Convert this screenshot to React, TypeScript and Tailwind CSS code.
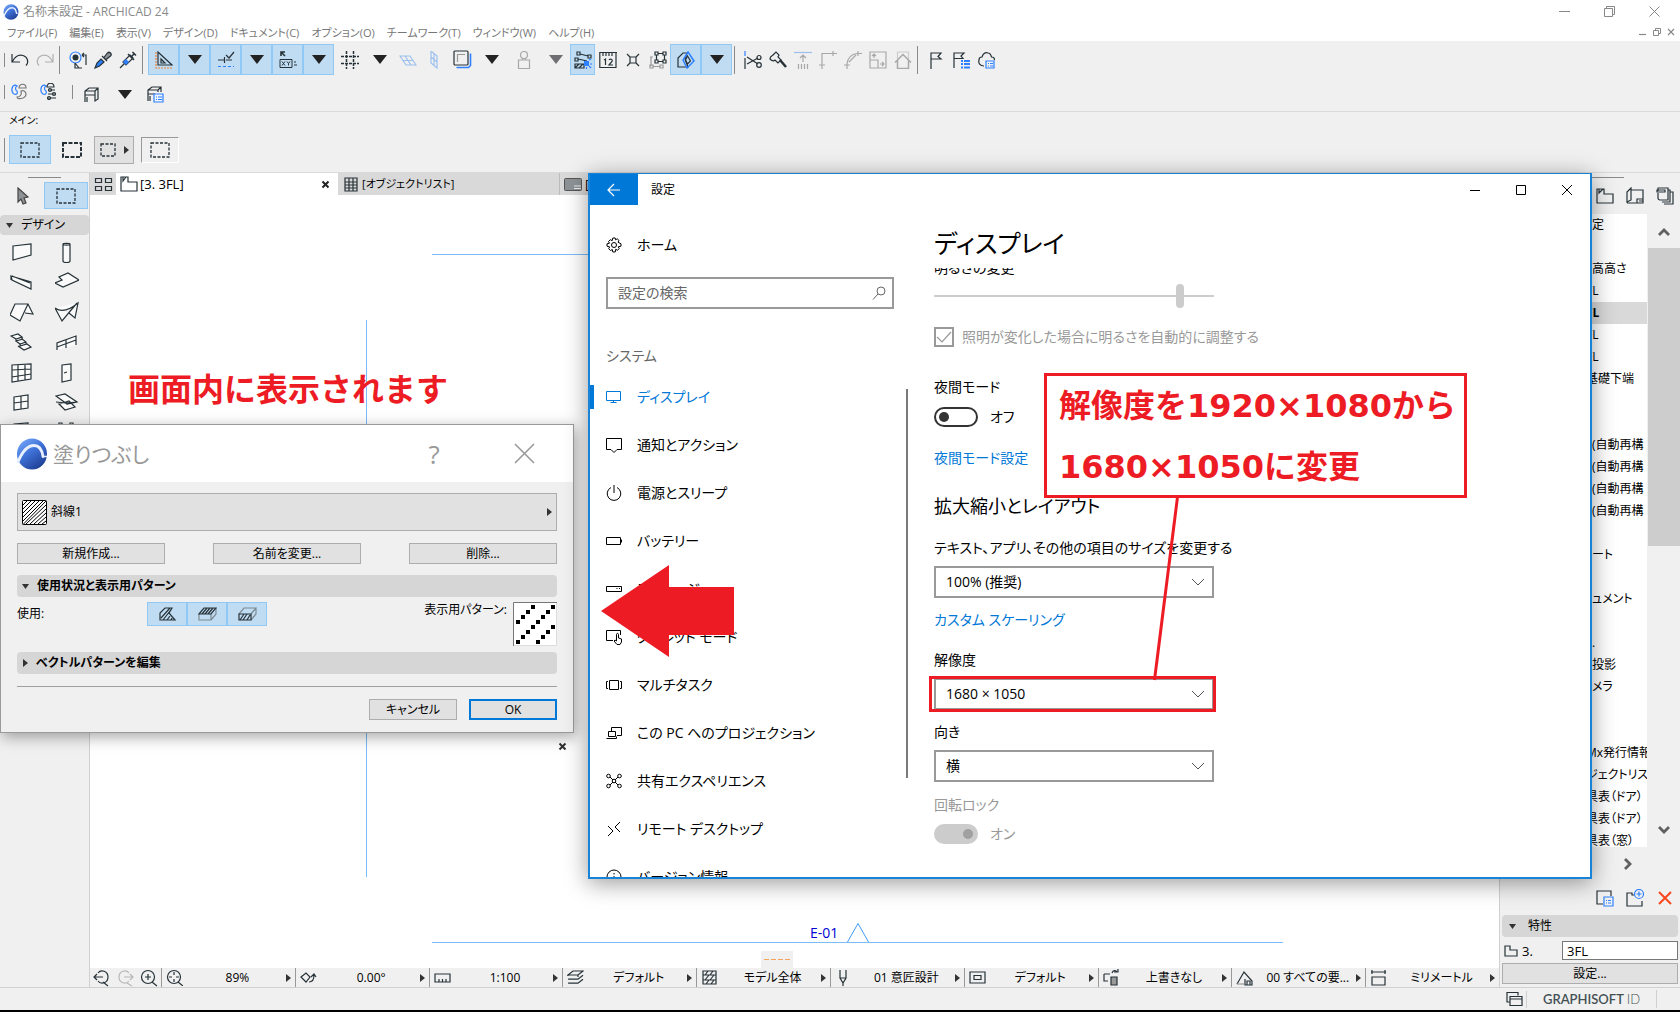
import type { ReactNode } from 'react'
import clsx from 'clsx'

interface IconProps {
    children: ReactNode
    size?: number
    stroke?: number
    className?: string
}

const INK = '#263238'
const BLUE = '#2f80ff'
const RED = '#ed1c24'

const Icon = ({ children, size = 18, stroke = 1.2, className }: IconProps) => (
    <svg
        width={size}
        height={size}
        viewBox={`0 0 ${size} ${size}`}
        fill="none"
        stroke="currentColor"
        strokeWidth={stroke}
        className={clsx('flex-shrink-0', className ?? 'text-[#263238]')}
        aria-hidden="true"
    >
        {children}
    </svg>
)

const Logo = ({ size }: { size: number }) => (
    <svg width={size} height={size} viewBox="0 0 32 32" className="flex-shrink-0" aria-hidden="true">
        <defs>
            <linearGradient id={`sphere${size}`} x1="0" y1="0" x2="0.7" y2="1">
                <stop offset="0" stopColor="#7fb0ff" />
                <stop offset="0.5" stopColor="#3f72d8" />
                <stop offset="1" stopColor="#1f3f94" />
            </linearGradient>
        </defs>
        <ellipse cx="16" cy="16" rx="15" ry="15.5" fill={`url(#sphere${size})`} />
        <path
            d="M2 24C6 14 11 7.500 18 7.500c5 0 8 4 9 11"
            fill="none"
            stroke="#e8f0ff"
            strokeWidth="2.800"
            strokeLinecap="round"
        />
        <path d="M27 18.500h4" stroke="#e8f0ff" strokeWidth="1.500" />
    </svg>
)

const TriDown = ({ dim }: { dim?: boolean }) => (
    <svg width="14" height="9" viewBox="0 0 14 9" aria-hidden="true">
        <path d="M0 0h14L7 9z" fill={dim ? '#6f6f73' : '#222'} />
    </svg>
)

const TriRight = () => (
    <svg width="5" height="8" viewBox="0 0 5 8" className="flex-shrink-0" aria-hidden="true">
        <path d="M0 0l5 4-5 4z" fill="#333" />
    </svg>
)

const Chevron = () => (
    <Icon size={14} className="text-[#555]">
        <path d="M1 4l6 6 6-6" strokeWidth={1} />
    </Icon>
)

const Marquee = ({ bold }: { bold?: boolean }) => (
    <svg width="20" height="16" viewBox="0 0 20 16" fill="none" stroke={INK} aria-hidden="true">
        <rect
            x="1"
            y="1"
            width="18"
            height="14"
            strokeWidth={bold ? 2 : 1.3}
            strokeDasharray={bold ? '4 1.5' : '3 1.5'}
        />
    </svg>
)

const SmallMarquee = () => (
    <svg width="16" height="14" viewBox="0 0 16 14" fill="none" stroke={INK} aria-hidden="true">
        <rect x="1" y="1" width="14" height="12" strokeWidth="1.3" strokeDasharray="3 1.5" />
    </svg>
)

interface ToolProps {
    label: string
    width?: string
    active?: boolean
    children: ReactNode
}

const Tool = ({ label, width = 'w-[25px]', active, children }: ToolProps) => (
    <button
        aria-label={label}
        className={clsx(
            'h-[31px] flex-shrink-0 flex items-center justify-center',
            width,
            active && 'bg-[#c0dcf3] border border-[#90c8f6]',
        )}
    >
        {children}
    </button>
)

const Divider = () => <div className="w-px h-7 ml-[2px] mr-[5px] bg-[#8a8a8a] flex-shrink-0" />

const Grip = () => <div className="w-px h-[14px] bg-[#8a8a8a] mr-[2px] flex-shrink-0" />

const menus = [
    'ファイル(F)',
    '編集(E)',
    '表示(V)',
    'デザイン(D)',
    'ドキュメント(C)',
    'オプション(O)',
    'チームワーク(T)',
    'ウィンドウ(W)',
    'ヘルプ(H)',
]

const TitleBar = () => (
    <header className="bg-white h-[41px] flex justify-between text-[#777]">
        <div>
            <div className="h-[22px] flex items-center gap-1 pl-[3px] pt-[2px]">
                <Logo size={16} />
                <h1 className="text-[12px] leading-4 text-[#8a8a8a]">名称未設定 - ARCHICAD 24</h1>
            </div>
            <nav className="h-[19px] flex items-center gap-3 pl-[7px] pt-[2px] text-[11px] leading-4">
                {menus.map((menu) => (
                    <button key={menu} className="whitespace-nowrap">
                        {menu}
                    </button>
                ))}
            </nav>
        </div>
        <div className="flex flex-col items-end">
            <div className="h-[22px] flex items-center gap-[34px] pr-5 text-[#888]">
                <button aria-label="最小化">
                    <Icon size={11} className="text-[#888]">
                        <path d="M0 5.500h11" strokeWidth={1} />
                    </Icon>
                </button>
                <button aria-label="元に戻す">
                    <Icon size={11} className="text-[#888]">
                        <path d="M.5 2.500h8v8h-8zM2.500 2.500v-2h8v8h-2" strokeWidth={1} />
                    </Icon>
                </button>
                <button aria-label="閉じる">
                    <Icon size={11} className="text-[#888]">
                        <path d="M.5.500l10 10M10.500.500l-10 10" strokeWidth={1} />
                    </Icon>
                </button>
            </div>
            <div className="h-[19px] flex items-center gap-[6px] pr-[5px]">
                <Icon size={8} className="text-[#888]">
                    <path d="M0 6.500h7" />
                </Icon>
                <Icon size={8} className="text-[#888]">
                    <path d="M.5 2.500h5v5h-5zM2.500 2.500v-2h5v5h-2" strokeWidth={1} />
                </Icon>
                <Icon size={8} className="text-[#888]">
                    <path d="M1 1l6 6M7 1L1 7" />
                </Icon>
            </div>
        </div>
    </header>
)

const Toolbar = () => (
    <div className="border-b border-[#dadada] pb-1">
        <div className="flex items-center pl-1 pt-[3px]">
            <Grip />
            <Tool label="取り消し">
                <Icon>
                    <path d="M1 3v8h8M1.500 10.500C4 5.500 8 3.500 12 4.500c5 1.500 6 7 3 10" />
                </Icon>
            </Tool>
            <Tool label="やり直し">
                <Icon className="text-[#b0b0b0]">
                    <path d="M17 3v8H9M16.500 10.500C14 5.500 10 3.500 6 4.500c-5 1.500-6 7-3 10" />
                </Icon>
            </Tool>
            <Divider />
            <Tool label="検索">
                <Icon>
                    <circle cx="6.500" cy="6.500" r="5.500" stroke={BLUE} />
                    <circle cx="6.500" cy="6.500" r="3" fill={INK} stroke="none" />
                    <path d="M6 12v5h7M6 12l4 5M17 14V4h-4M13 4l2-2M13 4l2 2" />
                </Icon>
            </Tool>
            <Tool label="吸い取り">
                <Icon>
                    <path d="M1 17l2-5 4-4 3 3-4.500 4z" fill={BLUE} stroke={INK} />
                    <path d="M8 5l5 5M9.500 7l4-5c2-2 5 1 3 3l-5 4" fill="#8d9296" />
                </Icon>
            </Tool>
            <Tool label="注入">
                <Icon>
                    <path d="M1 17l4-4M4 11l3 3 7-7-3-3z" />
                    <path d="M4 11l3 3 3-3-3-3z" fill={BLUE} stroke="none" />
                    <path d="M9 3l6 6M12.500 5.500l3-3M13.500 1l3.500 3.500" strokeWidth={1.500} />
                </Icon>
            </Tool>
            <Divider />
            <Tool label="ガイド線" width="w-[31px]" active>
                <Icon>
                    <path d="M3 1v13h14zM6 8v4h4z" />
                    <path d="M1 1v16h17" stroke="#f08030" strokeDasharray="2 1" />
                </Icon>
            </Tool>
            <Tool label="ガイド線オプション" width="w-[31px]" active>
                <TriDown />
            </Tool>
            <Tool label="スナップ" width="w-[31px]" active>
                <Icon>
                    <path d="M1 9h6M7.500 6v6M9 9h6M9 4l3 3 5-6" />
                    <path d="M1 15.500h16" stroke={BLUE} strokeDasharray="3 2" />
                </Icon>
            </Tool>
            <Tool label="スナップオプション" width="w-[31px]" active>
                <TriDown />
            </Tool>
            <Tool label="座標" width="w-[31px]" active>
                <Icon>
                    <path d="M2 5V1h4M2 1l4 4" strokeWidth={1.600} />
                    <path d="M1 8.500h12v8H1zM3 10.500l3 4M6 10.500l-3 4M8 10.500l1.500 2 1.500-2M9.500 12.500v2M15 11h2M15 14h3" strokeWidth={1} />
                </Icon>
            </Tool>
            <Tool label="座標オプション" width="w-[31px]" active>
                <TriDown />
            </Tool>
            <Tool label="グリッド" width="w-8">
                <Icon>
                    <path d="M5.500 0v18M12.500 0v18M0 5.500h18M0 12.500h18" strokeDasharray="3 1" strokeWidth={1.500} />
                </Icon>
            </Tool>
            <Tool label="グリッドオプション" width="w-7">
                <TriDown />
            </Tool>
            <Tool label="編集平面" width="w-7">
                <Icon className="text-[#9cc0ee]">
                    <path d="M1 5h10l6 9H7zM4 9.500h10M6 5l6 9" />
                </Icon>
            </Tool>
            <Tool label="垂直平面" width="w-6">
                <Icon className="text-[#9cc0ee]">
                    <path d="M6 0l6 5v12l-6-5zM9 3v11M6 6l6 5" />
                </Icon>
            </Tool>
            <Tool label="参照" width="w-8">
                <Icon size={19}>
                    <path d="M3.500 17.500h12l2-2v-12" stroke={BLUE} strokeWidth={1.600} />
                    <rect x="1" y="1" width="14" height="14" rx="1" />
                    <path d="M4.500 12V4.500H12" stroke="#999" />
                </Icon>
            </Tool>
            <Tool label="参照オプション" width="w-7">
                <TriDown />
            </Tool>
            <Tool label="重力" width="w-9">
                <Icon className="text-[#a8a8a8]">
                    <circle cx="9" cy="4" r="3.500" />
                    <path d="M7.500 7v2M10.500 7v2M3.500 9h11v8.500h-11z" />
                </Icon>
            </Tool>
            <Tool label="重力オプション" width="w-7">
                <TriDown dim />
            </Tool>
            <Tool label="グループの一時解除" active>
                <Icon>
                    <path d="M3 1h3v3H3zM14 4h3v3h-3zM1 7h3v3H1zM6 3l8 2M4 8l9 2" />
                    <path d="M1 13h9v4H1zM1 17l4-4M5 17l4-4" />
                    <path d="M10 10h5v5h-5z" fill={BLUE} stroke="none" />
                    <path d="M16 13h2M15 15l2 2M12.500 16v2M15 9l2-1" stroke={BLUE} />
                </Icon>
            </Tool>
            <Tool label="計測">
                <Icon>
                    <path d="M.8 1v15.500H17V1M1 1.500h17M4 2v3M7 2v3M10 2v3M13 2v3M5 9l1.500-1v6M10 9c1-1.500 4-1 3 1.500L10 14h4" />
                </Icon>
            </Tool>
            <Tool label="分解">
                <Icon>
                    <path d="M6 6h6v6H6zM3 3l3 3M15 3l-3 3M3 15l3-3M15 15l-3-3" />
                </Icon>
            </Tool>
            <Tool label="グループ">
                <Icon>
                    <path d="M6 1h3v3H6zM14 1h3v3h-3zM6 9h3v3H6zM14 9h3v3h-3zM9 2.500h5M9 10.500h5M7.500 4v5M15.500 4v5" />
                    <path d="M1 6h3M2 6v9M1 14h3v3H1zM11 14h3v3h-3zM4 15.500h7" stroke="#999" />
                </Icon>
            </Tool>
            <Tool label="トレース" width="w-[31px]" active>
                <Icon>
                    <path d="M1 16V7l5-5h4l-2 6 3 8z" />
                    <path d="M11 1l6 9-7 7-4-8z" stroke={BLUE} strokeWidth={1.500} />
                    <path d="M10.500 5l3 5-3 3-2-4z" />
                </Icon>
            </Tool>
            <Tool label="トレースオプション" width="w-[31px]" active>
                <TriDown />
            </Tool>
            <Divider />
            <Tool label="切断">
                <Icon>
                    <path d="M1 0v5" stroke={BLUE} />
                    <path d="M1 7v11M3 6l11 7M3 13l11-6" />
                    <circle cx="15" cy="6.500" r="2" />
                    <circle cx="15" cy="14" r="2.300" />
                </Icon>
            </Tool>
            <Tool label="調整">
                <Icon>
                    <path d="M1 8c0-3 2-3 3-4l3-3 3 3-1 2 3 3-3 3-3-3c-1 1-3 1-5-1z" />
                    <path d="M11 9l6 7" strokeWidth={2.500} />
                </Icon>
            </Tool>
            <Tool label="高度を調整">
                <Icon className="text-[#a8a8a8]">
                    <path d="M0 1.500h18" stroke="#9cc0ee" />
                    <path d="M9 11V4M6 7l3-3 3 3M4.500 13v5M7.500 13v5M10.500 13v5M13.500 13v5" />
                </Icon>
            </Tool>
            <Tool label="交差">
                <Icon className="text-[#a8a8a8]">
                    <path d="M3 18V2.500h15M14 0v5M0 14h6" />
                </Icon>
            </Tool>
            <Tool label="フィレット">
                <Icon className="text-[#a8a8a8]">
                    <path d="M3 18v-5C4 6 8 3 13 2.500h5M14 0v5M0 14h6M5 11l7-7" />
                </Icon>
            </Tool>
            <Tool label="サイズ変更">
                <Icon className="text-[#a8a8a8]">
                    <path d="M1 1h16v16H1zM1 9h8v8M5 7V3M3 5l2-2 2 2M11 13h4M13 11l2 2-2 2" />
                </Icon>
            </Tool>
            <Tool label="屋根">
                <Icon className="text-[#a8a8a8]">
                    <path d="M3.500 8V1h11v7" stroke="#ccc" />
                    <path d="M1 11.500l8-8 8 8M3.500 9.500v8h11v-8" strokeWidth={1.500} />
                </Icon>
            </Tool>
            <Divider />
            <Tool label="マーク">
                <Icon>
                    <path d="M4 18V2h10l-3 3.500L14 8H4" />
                </Icon>
            </Tool>
            <Tool label="マーク一覧">
                <Icon>
                    <path d="M2 17V2h10l-3 3 2 2.500H2" />
                    <path d="M9 10h2M12 10h6M9 13h2M12 13h6M9 16.500h2M12 16.500h6" stroke={BLUE} strokeWidth={2} />
                </Icon>
            </Tool>
            <Tool label="クラウド">
                <Icon>
                    <path d="M7 15c-4 0-6-3-5-6 0-2 1-3 3-3 1-4 4-5 6-4 2 0 3 2 3.500 4C17 6 18 8 17 9" />
                    <path d="M9 10h8v7H9zM11 12.500h1M13 12.500h3M11 15h1M13 15h3" stroke={BLUE} />
                </Icon>
            </Tool>
        </div>
        <div className="flex items-center pl-1 pt-px">
            <Grip />
            <Tool label="リンク">
                <Icon size={17}>
                    <path d="M4 2C0 3 0 9 3 11c3 1 4-1 3-3C4 7 4 4 6 3z" stroke={BLUE} />
                    <path d="M8 5c0-5 7-5 7 0zM10 8c5-2 7 5 2 7-3 1-6 1-6-1 3 0 5-2 4-6z" stroke="#777" />
                </Icon>
            </Tool>
            <Tool label="リンク設定" width="w-8">
                <Icon size={17}>
                    <path d="M4 2C0 3 0 9 3 11c3 1 4-1 3-3C4 7 4 4 6 3z" stroke={BLUE} />
                    <path d="M7 4c0-5 7-5 7 0zM8 7h7M8 11h8M8 15h8" />
                    <circle cx="10" cy="7" r="1.500" />
                    <circle cx="14" cy="11" r="1.500" />
                    <circle cx="9" cy="15" r="1.500" />
                </Icon>
            </Tool>
            <div className="w-px h-[14px] ml-2 mr-[6px] bg-[#8a8a8a]" />
            <Tool label="オブジェクト" width="w-6">
                <Icon size={16} className="text-[#263238] mt-[6px]">
                    <path d="M2 15V4l4-3h9v11l-3 2V4H2M2 8h10M4 10v5M12 4l3-3" />
                </Icon>
            </Tool>
            <Tool label="オブジェクトオプション" width="w-11">
                <span className="mt-[6px]">
                    <TriDown />
                </span>
            </Tool>
            <Tool label="オブジェクト設定" width="w-4">
                <Icon size={17} className="text-[#263238] mt-[6px]">
                    <path d="M1 15V4l4-3h9v5M1 8h7M3 10v5M1 4h10v2M11 4l3-3" />
                    <path d="M7 8h9v8H7zM9 11h1M11 11h4M9 13.500h1M11 13.500h4" stroke={BLUE} fill="#eef5ff" />
                </Icon>
            </Tool>
        </div>
    </div>
)

const InfoBox = () => (
    <div className="h-[61px] border-b border-[#dadada] text-[10px] leading-4 text-black">
        <div className="pl-[9px]">メイン:</div>
        <div className="flex items-center pl-1 pt-[7px]">
            <div className="w-px h-6 bg-[#8a8a8a] mr-1" />
            <button aria-label="選択範囲" className="w-[42px] h-[29px] flex items-center justify-center bg-[#c0dcf3] border border-[#90c8f6]">
                <Marquee />
            </button>
            <button aria-label="太線選択" className="w-[42px] h-7 flex items-center justify-center">
                <Marquee bold />
            </button>
            <button aria-label="形状" className="w-10 h-7 ml-px flex items-center justify-center gap-2 bg-[#e1e1e1] border border-[#adadad]">
                <SmallMarquee />
                <TriRight />
            </button>
            <button aria-label="矩形" className="w-[38px] h-[26px] ml-[7px] flex items-center justify-center border border-t-[#999] border-l-[#999] border-white">
                <Marquee />
            </button>
        </div>
    </div>
)

const designTools: { label: string; paths: string }[] = [
    { label: '壁', paths: 'M3 4l18-2v11L3 18z' },
    { label: '柱', paths: 'M8 2c0-1 7-1 7 0v17c0 2-7 2-7 0zM8 2c0 1.500 7 1.500 7 0' },
    { label: '梁', paths: 'M1 4l20 6v7L2 8zM1 4v4M2 4l18 7' },
    { label: 'スラブ', paths: 'M0 11l7-3-3-3 9-4 11 7-16 7z' },
    { label: '屋根', paths: 'M5 2h13l5 10-8-1M18 2L10 19 0 13 5 2h13' },
    { label: 'シェル', paths: 'M0 6c8 6 17 0 23-5l-3 15-6-5M0 6l7 13L22 1' },
    { label: '階段', paths: 'M1 4l7-2 4 3-6 2zM6 7v2l7-2M6 9l4 3 6-2M10 12v2l7-2 4 3-7 3-6-4M12 5v2l4 3v2' },
    { label: '手摺り', paths: 'M2 18v-7l19-7v9M2 15l19-7M11 8v8' },
    { label: 'カーテンウォール', paths: 'M2 3l19-1v15L2 20zM8 3v16M15 2v16M2 8l19-1M2 15l19-3' },
    { label: 'ドア', paths: 'M7 3l9-1v16l-9 2zM9 11l3-1' },
    { label: '窓', paths: 'M4 5l14-2v13L4 18zM11 4v13M4 11l14-2' },
    { label: 'スカイライト', paths: 'M1 4l9-2 12 8-10 2zM4 12l6 6 10-3-6-6-9 3zM1 10l10 1 11-1' },
    { label: 'コーナー窓', paths: 'M4 2l14-1v13L4 16zM11 2v13' },
    { label: 'オブジェクト', paths: 'M4 1h3v3h8V1h3v10H4z' },
]

const Toolbox = () => (
    <aside className="w-[90px] flex-shrink-0 border-r border-[#d0d0d0] overflow-hidden">
        <div className="w-[33px] h-px mx-auto mt-1 bg-[#8a8a8a]" />
        <div className="flex items-center pt-1">
            <button aria-label="矢印" className="w-11 h-[27px] flex items-center justify-center">
                <Icon className="text-[#444]">
                    <path d="M5 1l10 9-4 1 2 5-3 1-2-5-3 3z" fill="#8d9296" />
                </Icon>
            </button>
            <button aria-label="選択範囲ツール" className="w-11 h-[27px] flex items-center justify-center bg-[#c0dcf3] border border-[#90c8f6]">
                <Marquee />
            </button>
        </div>
        <button className="w-full h-5 mt-[6px] pl-[6px] flex items-center gap-2 bg-[#d6d6d6] rounded-sm text-[12px] leading-4 text-black">
            <svg width="7" height="5" viewBox="0 0 7 5" aria-hidden="true">
                <path d="M0 0h7L3.500 5z" fill="#333" />
            </svg>
            デザイン
        </button>
        <div className="grid grid-cols-2 pt-[2px]">
            {designTools.map((tool) => (
                <button key={tool.label} aria-label={tool.label} className="h-[30px] flex items-center justify-center">
                    <Icon size={24}>
                        <path d={tool.paths} fill="#fafafa" transform="translate(0 2)" />
                    </Icon>
                </button>
            ))}
        </div>
    </aside>
)

const TabBar = () => (
    <div className="h-[22px] flex bg-[#d9d9d9] leading-4 text-black">
        <button aria-label="タブ一覧" className="w-[26px] flex items-center justify-center">
            <Icon size={19}>
                <path d="M1.500 3.500h6v4h-6zM11.500 3.500h6v4h-6zM1.500 11.500h6v4h-6zM11.500 11.500h6v4h-6z" />
            </Icon>
        </button>
        <div className="w-[222px] pl-1 pr-2 flex items-center gap-[2px] bg-white text-[13px]">
            <Icon size={18}>
                <path d="M1 2h7v5h9v9H1zM3 2v4l3-4" />
            </Icon>
            <span className="flex-1">[3. 3FL]</span>
            <button aria-label="タブを閉じる">
                <Icon size={9} className="text-[#222]">
                    <path d="M1.500 1.500l6 6M7.500 1.500l-6 6" strokeWidth={2} />
                </Icon>
            </button>
        </div>
        <div className="w-[222px] pl-[6px] flex items-center gap-[3px] border-r border-[#bbb] text-[11px]">
            <Icon size={15}>
                <path d="M1 1h12v13H1zM1 5h12M1 8h12M1 11h12M5 1v13M9 1v13" />
            </Icon>
            <span>[オブジェクトリスト]</span>
        </div>
        <div className="pl-1 flex items-center gap-[3px] text-[13px]">
            <svg width="18" height="13" viewBox="0 0 18 13" aria-hidden="true">
                <rect x=".5" y=".5" width="17" height="12" rx="1" fill="#8d9296" stroke="#555" />
                <path d="M10 8h7M10 10.500h7" stroke="#eee" />
            </svg>
            <span>[</span>
        </div>
    </div>
)

const Canvas = () => (
    <main className="relative flex-1 bg-white overflow-hidden">
        <svg width="1400" height="773" className="absolute left-0 top-0" aria-hidden="true">
            <g stroke="#7abcf8" strokeWidth="1" fill="none" shapeRendering="crispEdges">
                <path d="M342 59.500h200M276.500 125v557M342 747.500h851" />
            </g>
            <path d="M757.500 747L768 728.500 778.500 747" stroke="#3f9af0" fill="none" />
            <path d="M671 756h32v17h-32z" fill="#f0f0f0" />
            <path d="M674 764.500h27" stroke="#f5a55a" strokeDasharray="5 2" />
            <text x="720" y="743" fontSize="14" fill="#0000d8">
                E-01
            </text>
        </svg>
        <button aria-label="パレットを閉じる" className="absolute left-[468px] top-[547px]">
            <Icon size={9} className="text-[#333]">
                <path d="M1.500 1.500l6 6M7.500 1.500l-6 6" strokeWidth={2} />
            </Icon>
        </button>
        <p className="absolute left-[38px] top-[170px] text-[32px] leading-[48px] font-bold text-[#ed1c24] whitespace-nowrap [font-feature-settings:normal]">
            画面内に表示されます
        </p>
    </main>
)

const quickOptions: { text: string; icon: ReactNode }[] = [
    { text: '89%', icon: <><circle cx="8" cy="8" r="6.500" /><path d="M12 13l5 4M8 3v3M8 10v3M3 8h3M10 8h3" /></> },
    { text: '0.00°', icon: <path d="M1 8l5-4 4 4-4 5zM9 13c4 0 5-3 5-7M11 8l3-3 2 3" /> },
    { text: '1:100', icon: <path d="M1 5h15v8H1zM5 13v-3M8.500 13v-3M12 13v-3" /> },
    { text: 'デフォルト', icon: <path d="M1 6l5-4h10l-5 4zM1 10l1 .2h9l5-4M1 14l1 .2h9l5-4M1 6v1M11 6v2" /> },
    { text: 'モデル全体', icon: <path d="M2 2h13v13H2zM2 6h13M2 11h13M4 6l3-4M9 6l3-4M4 11l4-5M9 11l4-5M5 15l3-4M10 15l3-4" /> },
    { text: '01 意匠設計', icon: <path d="M5 1v8l3 5 3-5V1M8 14v3M5 9h6" /> },
    { text: 'デフォルト', icon: <path d="M1 3h15v11H1zM5 6.500h7v4H5z" /> },
    { text: '上書きなし', icon: <><path d="M1 5h6M1 5v7h4M9 4c1-3 4-3 5-1M11 3h4V0" /><path d="M8 8h6v8H8z" fill="#9a9a9a" /></> },
    { text: '00 すべての要...', icon: <><path d="M1 15L8 3l8 9v4h-7v-6" /><path d="M1 15h7" stroke="#999" /><path d="M11 16v-4h3v4" /></> },
    { text: 'ミリメートル', icon: <path d="M1 3h15M2 1v4M15 1v4M2 8h13v8H2z" /> },
]

const QuickOptions = () => (
    <div className="h-[19px] flex bg-[#f0f0f0] text-[12px] leading-4 text-black">
        <div className="w-[71px] flex items-center justify-around">
            <Icon>
                <path d="M5 12c3 4 10 2 10-4S8 0 5 4M1 8h9M4 5L1 8l3 3M10 13l5 4" />
            </Icon>
            <Icon className="text-[#b8b8b8]">
                <path d="M13 12c-3 4-10 2-10-4s7-8 10-4M8 8h9M14 5l3 3-3 3M11 14l5 3" />
            </Icon>
            <Icon>
                <circle cx="8" cy="8" r="6.500" />
                <path d="M8 5v6M5 8h6M12 13l5 4" />
            </Icon>
        </div>
        {quickOptions.map((option, i) => (
            <button key={i} className="flex-1 min-w-0 flex items-center pl-1 pr-1 border-l border-[#999]">
                <Icon size={17}>{option.icon}</Icon>
                <span className="flex-1 pl-[6px] text-center whitespace-nowrap">{option.text}</span>
                <TriRight />
            </button>
        ))}
    </div>
)

interface NavigatorRow {
    text: string
    bold?: boolean
    hang?: boolean
}

const navigatorRows: NavigatorRow[] = [
    { text: '定' },
    { text: '' },
    { text: '高高さ' },
    { text: 'FL', hang: true },
    { text: 'FL', bold: true, hang: true },
    { text: 'FL', hang: true },
    { text: 'FL', hang: true },
    { text: '基礎下端', hang: true },
    { text: '' },
    { text: '' },
    { text: '(自動再構' },
    { text: '(自動再構' },
    { text: '(自動再構' },
    { text: '(自動再構' },
    { text: '' },
    { text: 'ート' },
    { text: '' },
    { text: 'ュメント' },
    { text: '' },
    { text: '.' },
    { text: '投影' },
    { text: 'メラ' },
    { text: '' },
    { text: '' },
    { text: 'Mx発行情報', hang: true },
    { text: 'ジェクトリスト', hang: true },
    { text: '具表（ドア）', hang: true },
    { text: '具表（ドア）', hang: true },
    { text: '具表（窓）', hang: true },
]

const Navigator = () => (
    <aside className="w-[181px] flex-shrink-0 flex flex-col border-l border-[#d0d0d0] text-[12px] leading-4 text-black">
        <div className="w-[124px] h-px mt-1 bg-[#8a8a8a] flex-shrink-0" />
        <div className="h-9 flex items-center justify-end gap-3 pr-[6px] flex-shrink-0">
            <Icon size={18}>
                <path d="M1 2h7v5h9v9H1zM3 2v4l4-4" />
            </Icon>
            <Icon size={18}>
                <path d="M1 15V5l4-4v12zM5 3h12v13H1M11 16v-4h6M13 14h4" />
            </Icon>
            <Icon size={18}>
                <path d="M2 4V1h10v12H4a2 2 0 01-2-2V6M1 5h8v-2H1zM12 3h2v12H6M14 5h3v12H8" />
            </Icon>
        </div>
        <div className="flex-1 min-h-0 flex">
            <ul className="flex-1 min-w-0 bg-white overflow-hidden">
                {navigatorRows.map((row, i) => (
                    <li
                        key={i}
                        className={clsx(
                            'h-[22px] pt-[3px] whitespace-nowrap',
                            row.hang ? 'pl-[86px]' : 'pl-[92px]',
                            row.bold && 'bg-[#d9d9d9] font-bold',
                        )}
                    >
                        {row.text}
                    </li>
                ))}
            </ul>
            <div className="w-[33px] flex flex-col items-center">
                <Icon size={14} className="text-[#606060] mt-[11px]">
                    <path d="M2 10l5-5 5 5" strokeWidth={2.800} />
                </Icon>
                <div className="w-8 h-[298px] mt-[9px] bg-[#cdcdcd]" />
                <div className="flex-1" />
                <Icon size={14} className="text-[#606060] mb-[10px]">
                    <path d="M2 4l5 5 5-5" strokeWidth={2.800} />
                </Icon>
            </div>
        </div>
        <div className="h-[34px] flex items-center justify-end pr-[45px] flex-shrink-0">
            <Icon size={14} className="text-[#606060]">
                <path d="M4 2l5 5-5 5" strokeWidth={2.800} />
            </Icon>
        </div>
        <div className="h-[34px] flex items-center justify-end gap-3 pr-[6px] flex-shrink-0">
            <Icon size={18}>
                <path d="M7 15H1V2h14v5" />
                <path d="M8 8h9v9H8zM10 11.500h1M12 11.500h3M10 14h1M12 14h3" stroke={BLUE} />
            </Icon>
            <Icon size={18}>
                <path d="M8 6H6V4H1v13h15v-5" />
                <circle cx="13" cy="5" r="4.500" stroke={BLUE} />
                <path d="M13 2.500v5M10.500 5h5" stroke={BLUE} />
            </Icon>
            <Icon size={18} className="text-[#f8481c]">
                <path d="M3 3l12 12M15 3L3 15" strokeWidth={2} />
            </Icon>
        </div>
        <div className="px-[2px] pb-[3px] flex-shrink-0">
            <button className="w-full h-[22px] pl-[7px] flex items-center gap-3 bg-[#d6d6d6] rounded-sm">
                <svg width="7" height="5" viewBox="0 0 7 5" aria-hidden="true">
                    <path d="M0 0h7L3.500 5z" fill="#333" />
                </svg>
                特性
            </button>
            <div className="flex items-center pl-[2px] pt-1 pb-[3px] gap-1">
                <Icon size={14}>
                    <path d="M1 2h5v4h7v6H1z" />
                </Icon>
                <label htmlFor="story" className="w-9 text-[13px]">
                    3.
                </label>
                <input
                    id="story"
                    defaultValue="3FL"
                    className="flex-1 min-w-0 h-[19px] px-1 bg-white border border-[#777] text-[13px]"
                />
            </div>
            <button className="w-full h-[21px] bg-[#e1e1e1] border border-[#adadad]">設定...</button>
        </div>
    </aside>
)

const StatusBar = () => (
    <footer className="h-[25px] flex flex-shrink-0 justify-end border-t border-[#d0d0d0] border-b-2 border-b-black">
        <div className="w-[181px] flex items-center">
            <div className="w-7 flex justify-end pr-[3px] border-r border-[#d0d0d0]">
                <Icon size={17}>
                    <path d="M4 5.500h12v9H4zM4 8h12M4 11H1V1.500h11v3" />
                </Icon>
            </div>
            <div className="w-[130px] text-center border-r border-[#d0d0d0] text-[13px] leading-[18px] font-semibold text-[#455055] font-[Lato]">
                GRAPHISOFT <span className="font-light">ID</span>
            </div>
        </div>
    </footer>
)

const DialogButton = ({ children, className }: { children: ReactNode; className?: string }) => (
    <button className={clsx('h-[21px] bg-[#e1e1e1] border', className)}>{children}</button>
)

const fillIcons = [
    { label: '作図用', paths: 'M2 15V8l5-5h7l-3 5 6 7zM3 13L12 3M5 15l7-9M9 15l3-4M13 15l1-2' },
    { label: '表面', paths: 'M1 9l5-6h12l-5 6zM4 9l5-6M7 9l5-6M10 9l5-6' },
    { label: '切断', paths: 'M1 9h12v6H1zM2 15l4-6M5 15l4-6M9 15l3-5' },
]

const fillBoxes = ['', 'M1 9v6h12V9M13 15l5-6V3', 'M1 9l5-6h12l-5 6M13 15l5-6V3']

const patternDots = [
    [18, 3], [13, 8], [8, 13], [3, 18], [38, 3], [33, 8], [28, 13], [23, 18],
    [18, 23], [13, 28], [8, 33], [3, 38], [38, 23], [33, 28], [28, 33], [23, 38],
]

const FillDialog = () => (
    <section
        aria-label="塗りつぶし"
        className="absolute left-0 top-[424px] w-[574px] bg-[#f0f0f0] border border-[#9a9a9a] shadow-[2px_4px_14px_rgba(0,0,0,0.35)] text-[12px] leading-4 text-black"
    >
        <div className="h-[57px] pl-[15px] pr-[38px] flex items-center bg-white">
            <Logo size={32} />
            <h2 className="flex-1 pl-[5px] text-[21px] leading-8 text-[#999]">塗りつぶし</h2>
            <button aria-label="ヘルプ" className="w-5 text-[26px] leading-8 text-[#999]">
                ?
            </button>
            <button aria-label="閉じる" className="ml-[70px]">
                <Icon size={21} className="text-[#999]">
                    <path d="M1 1l19 19M20 1L1 20" strokeWidth={1.600} />
                </Icon>
            </button>
        </div>
        <div className="px-4 pt-[11px] pb-3">
            <button className="w-full h-[38px] px-1 flex items-center gap-1 bg-[#e1e1e1] border border-[#adadad]">
                <svg width="25" height="25" viewBox="0 0 25 25" aria-hidden="true">
                    <rect x=".5" y=".5" width="24" height="24" rx="1" fill="#fff" stroke="#000" />
                    <path
                        d="M1 5l4-4M1 9l8-8M1 13L13 1M1 17L17 1M1 21L21 1M1 24.500L24 1M4 24L24 5M8 24L24 9M12 24l12-11M16 24l8-7M20 24l4-3"
                        stroke="#000"
                    />
                </svg>
                <span className="flex-1 text-left">斜線1</span>
                <TriRight />
            </button>
            <div className="flex justify-between pt-3">
                <DialogButton className="w-[148px] border-[#adadad]">新規作成...</DialogButton>
                <DialogButton className="w-[148px] border-[#adadad]">名前を変更...</DialogButton>
                <DialogButton className="w-[148px] border-[#adadad]">削除...</DialogButton>
            </div>
            <button className="w-full h-[22px] mt-[11px] pl-[5px] flex items-center gap-2 bg-[#d6d6d6] rounded-sm font-bold">
                <svg width="7" height="5" viewBox="0 0 7 5" aria-hidden="true">
                    <path d="M0 0h7L3.500 5z" fill="#333" />
                </svg>
                使用状況と表示用パターン
            </button>
            <div className="flex items-start pt-[5px]">
                <span className="w-[130px] pt-1">使用:</span>
                <div className="flex">
                    {fillIcons.map((icon, i) => (
                        <button
                            key={icon.label}
                            aria-label={icon.label}
                            className="w-10 h-6 flex items-center justify-center bg-[#c0dcf3] border border-[#90c8f6]"
                        >
                            <Icon size={19}>
                                <path d={fillBoxes[i]} stroke="#7d8a92" />
                                <path d={icon.paths} />
                            </Icon>
                        </button>
                    ))}
                </div>
                <span className="flex-1 pr-[6px] text-right">表示用パターン:</span>
                <svg width="44" height="44" viewBox="0 0 44 44" aria-hidden="true">
                    <path d="M0 0h44v44H0z" fill="#fff" />
                    <path d="M43.500 1v42.500H1" stroke="#ddd" fill="none" />
                    <path d="M.5 44V.5H44" stroke="#777" fill="none" />
                    {patternDots.map(([x, y]) => (
                        <path key={`${x}-${y}`} d={`M${x} ${y}h4v4h-4z`} fill="#000" />
                    ))}
                </svg>
            </div>
            <button className="w-full h-[22px] mt-[6px] pl-[6px] flex items-center gap-2 bg-[#d6d6d6] rounded-sm font-bold">
                <TriRight />
                ベクトルパターンを編集
            </button>
            <div className="h-px mt-3 bg-[#a0a0a0]" />
            <div className="flex justify-end gap-3 pt-3">
                <DialogButton className="w-[88px] border-[#adadad]">キャンセル</DialogButton>
                <DialogButton className="w-[88px] border-2 border-[#0078d7] leading-3">OK</DialogButton>
            </div>
        </div>
    </section>
)

const settingsNav: { text: string; icon: ReactNode; active?: boolean }[] = [
    { text: 'ディスプレイ', active: true, icon: <path d="M.5 2.500h14v9H.5zM7.500 11.500v2M4.500 13.500h6" /> },
    { text: '通知とアクション', icon: <path d="M.5 1.500h15v11H11L8 15.500l-3-3H.5z" /> },
    { text: '電源とスリープ', icon: <path d="M5 2.500a6.800 6.800 0 106 0M8 0v8" /> },
    { text: 'バッテリー', icon: <path d="M.5 4.500h14v7H.5zM15.500 6.500v3" /> },
    { text: 'ストレージ', icon: <path d="M.5 5.500h15v5H.5zM10.500 7.500h1M13 7.500h1" /> },
    { text: 'タブレット モード', icon: <path d="M7 11.500H.5v-10h14V6M10.500 12V5.500c0-1.500 2-1.500 2 0V9l3 1v3l-1.500 2.500h-3L8 12l1-1 1.500 1" /> },
    { text: 'マルチタスク', icon: <path d="M3.500 3.500h9v9h-9zM2 4.500H.5v7H2M14 4.500h1.500v7H14" /> },
    { text: 'この PC へのプロジェクション', icon: <path d="M5.500 6V2.500h10v8H11M2.500 6.500h7v5h-7zM.5 13.500h10v-2" /> },
    {
        text: '共有エクスペリエンス',
        icon: (
            <>
                <circle cx="2.500" cy="3" r="1.800" />
                <circle cx="13.500" cy="3" r="1.800" />
                <circle cx="2.500" cy="13" r="1.800" />
                <circle cx="13.500" cy="13" r="1.800" />
                <circle cx="8" cy="8" r="1.800" />
                <path d="M4 4l3 3M12 4L9 7M4 12l3-3M12 12L9 9" />
            </>
        ),
    },
    { text: 'リモート デスクトップ', icon: <path d="M2 5l5 5-5 5M14 1L9 6l5 5" /> },
    { text: 'バージョン情報', icon: <><circle cx="8" cy="8" r="7" /><path d="M8 7v5M8 4v1.500" /></> },
]

const SettingsSelect = ({ id, label, value }: { id: string; label: string; value: string }) => (
    <>
        <label htmlFor={id} className="block">
            {label}
        </label>
        <div className="relative w-[280px] mt-2">
            <select id={id} className="w-full h-8 pl-[10px] appearance-none bg-white border-2 border-[#999]">
                <option>{value}</option>
            </select>
            <div className="absolute right-[9px] top-[9px] pointer-events-none">
                <Chevron />
            </div>
        </div>
    </>
)

const SettingsWindow = () => (
    <section
        aria-label="設定"
        className="absolute left-[588px] top-[173px] w-[1004px] h-[706px] flex flex-col bg-white border-2 border-t border-[#1883d7] shadow-[0_4px_22px_rgba(0,0,0,0.4)] text-[14px] leading-5 text-black"
    >
        <div className="h-[31px] flex flex-shrink-0 items-center">
            <button aria-label="戻る" className="w-12 h-[31px] flex items-center justify-center bg-[#0078d7]">
                <Icon size={14} className="text-white">
                    <path d="M1 7h12M7 1L1 7l6 6" />
                </Icon>
            </button>
            <h2 className="flex-1 pl-[13px] text-[12px] leading-4">設定</h2>
            <div className="flex items-center gap-[36px] pr-[18px]">
                <button aria-label="設定を最小化">
                    <Icon size={10} className="text-black">
                        <path d="M0 5.500h10" strokeWidth={1} />
                    </Icon>
                </button>
                <button aria-label="設定を最大化">
                    <Icon size={10} className="text-black">
                        <path d="M.5.500h9v9h-9z" strokeWidth={1} />
                    </Icon>
                </button>
                <button aria-label="設定を閉じる">
                    <Icon size={10} className="text-black">
                        <path d="M0 0l10 10M10 0L0 10" strokeWidth={1} />
                    </Icon>
                </button>
            </div>
        </div>
        <div className="flex flex-1 min-h-0">
            <div className="w-[318px] flex flex-col">
                <button className="pl-4 pt-[30px] flex items-center gap-[15px]">
                    <Icon size={16} className="text-black">
                        <circle cx="8" cy="8" r="2.500" strokeWidth={1} />
                        <path
                            d="M6.800 1h2.400l.4 1.800 1.600-1 1.800 1.700-1 1.700L15 6.800v2.400l-2.800.6 1 1.800-1.700 1.700-1.800-1L9.200 15H6.800l-.5-2.500-1.800 1-1.800-1.800 1-1.800L1 9.200V6.800l2.500-.6-1-1.700 1.800-1.800 1.900 1z"
                            strokeWidth={1}
                        />
                    </Icon>
                    ホーム
                </button>
                <div className="w-72 h-8 ml-4 mt-[22px] pl-[10px] pr-[6px] flex items-center border-2 border-[#999]">
                    <input aria-label="設定の検索" placeholder="設定の検索" className="flex-1 min-w-0 outline-none placeholder:text-[#666]" />
                    <Icon size={14} className="text-[#666]">
                        <circle cx="9" cy="5" r="4" strokeWidth={1} />
                        <path d="M6 8l-5 5.500" strokeWidth={1} />
                    </Icon>
                </div>
                <h3 className="pl-4 pt-[37px] text-[#666]">システム</h3>
                <nav className="flex-1 min-h-0 flex mt-[7px]">
                    <ul className="flex-1 overflow-hidden">
                        {settingsNav.map((item) => (
                            <li key={item.text} className="h-12 flex items-center">
                                <div className={clsx('w-1 h-6', item.active && 'bg-[#0078d7]')} />
                                <a
                                    href="#"
                                    className={clsx('pl-3 flex items-center gap-[15px] whitespace-nowrap', item.active && 'text-[#0078d7]')}
                                >
                                    <Icon size={16} stroke={1} className={item.active ? 'text-[#0078d7]' : 'text-black'}>
                                        {item.icon}
                                    </Icon>
                                    {item.text}
                                </a>
                            </li>
                        ))}
                    </ul>
                    <div className="w-[2px] h-[389px] mt-4 bg-[#7a7a7a]" />
                </nav>
            </div>
            <div className="flex-1 min-w-0 pl-[26px]">
                <h1 className="pt-5 text-[25px] leading-9">ディスプレイ</h1>
                {/* content is scrolled, so the first label is cut by the heading */}
                <div className="h-2 mt-[7px] flex items-end overflow-hidden">
                    <label htmlFor="brightness" className="leading-[16px]">
                        明るさの変更
                    </label>
                </div>
                <input
                    id="brightness"
                    type="range"
                    disabled
                    defaultValue={89}
                    className="block w-[280px] h-6 mt-2 appearance-none bg-transparent [&::-webkit-slider-runnable-track]:h-[2px] [&::-webkit-slider-runnable-track]:bg-[#ccc] [&::-webkit-slider-thumb]:appearance-none [&::-webkit-slider-thumb]:w-2 [&::-webkit-slider-thumb]:h-6 [&::-webkit-slider-thumb]:-mt-[11px] [&::-webkit-slider-thumb]:rounded-full [&::-webkit-slider-thumb]:bg-[#ccc]"
                />
                <div className="relative flex items-center gap-2 mt-[19px] text-[#999]">
                    <input id="auto" type="checkbox" disabled defaultChecked className="w-5 h-5 appearance-none border-2 border-[#999]" />
                    <Icon size={20} className="text-[#999] absolute left-0 top-0">
                        <path d="M3 10l5 5 9-10" />
                    </Icon>
                    <label htmlFor="auto">照明が変化した場合に明るさを自動的に調整する</label>
                </div>
                <div className="mt-[30px]">夜間モード</div>
                <div className="flex items-center gap-3 mt-[10px]">
                    <input
                        id="night"
                        type="checkbox"
                        role="switch"
                        className="w-11 h-5 px-[3px] flex items-center appearance-none rounded-full border-2 border-[#333] before:w-[10px] before:h-[10px] before:rounded-full before:bg-[#333]"
                    />
                    <label htmlFor="night">オフ</label>
                </div>
                <a href="#" className="block w-fit mt-[21px] text-[#0078d7]">
                    夜間モード設定
                </a>
                <h3 className="mt-6 text-[18px] leading-7">拡大縮小とレイアウト</h3>
                <div className="mt-[18px]">
                    <SettingsSelect id="scale" label="テキスト、アプリ、その他の項目のサイズを変更する" value="100% (推奨)" />
                </div>
                <a href="#" className="block w-fit mt-3 text-[#0078d7]">
                    カスタム スケーリング
                </a>
                <div className="mt-5">
                    <SettingsSelect id="resolution" label="解像度" value="1680 × 1050" />
                </div>
                <div className="mt-3">
                    <SettingsSelect id="orientation" label="向き" value="横" />
                </div>
                <div className="mt-[13px] text-[#999]">回転ロック</div>
                <div className="flex items-center gap-3 mt-[9px] text-[#999]">
                    <input
                        id="rotation"
                        type="checkbox"
                        role="switch"
                        disabled
                        defaultChecked
                        className="w-11 h-5 px-[5px] flex items-center justify-end appearance-none rounded-full bg-[#ccc] before:w-[10px] before:h-[10px] before:rounded-full before:bg-[#a0a0a0]"
                    />
                    <label htmlFor="rotation">オン</label>
                </div>
            </div>
        </div>
    </section>
)

const Annotations = () => (
    <>
        <svg width="133" height="92" viewBox="0 0 133 92" className="absolute left-[601px] top-[565px]" aria-hidden="true">
            <path d="M0 46L68 0v22h65v48H68v22z" fill={RED} />
        </svg>
        <svg width="30" height="184" viewBox="0 0 30 184" className="absolute left-[1150px] top-[497px]" aria-hidden="true">
            <path d="M27.500 0L4.500 183" stroke={RED} strokeWidth="3" />
        </svg>
        <div className="absolute left-[929px] top-[676px] w-[287px] h-9 border-3 border-[#ed1c24] pointer-events-none" />
        <div className="absolute left-[1044px] top-[373px] w-[423px] h-[125px] pl-3 bg-white border-3 border-[#ed1c24] text-[#ed1c24] text-[32px] leading-[61px] font-bold whitespace-nowrap font-['DejaVu_Sans','Noto_Sans_CJK_JP',sans-serif] [font-feature-settings:normal]">
            <p>解像度を1920×1080から</p>
            <p>1680×1050に変更</p>
        </div>
    </>
)

export default function App() {
    return (
        <div
            lang="ja"
            className="relative h-screen flex flex-col overflow-hidden bg-[#f0f0f0] font-['Open_Sans','Noto_Sans_CJK_JP',sans-serif] [font-feature-settings:'palt']"
        >
            <TitleBar />
            <Toolbar />
            <InfoBox />
            <div className="flex-1 min-h-0 flex">
                <Toolbox />
                <div className="flex-1 min-w-0 flex flex-col">
                    <TabBar />
                    <Canvas />
                    <QuickOptions />
                </div>
                <Navigator />
            </div>
            <StatusBar />
            <FillDialog />
            <SettingsWindow />
            <Annotations />
        </div>
    )
}
